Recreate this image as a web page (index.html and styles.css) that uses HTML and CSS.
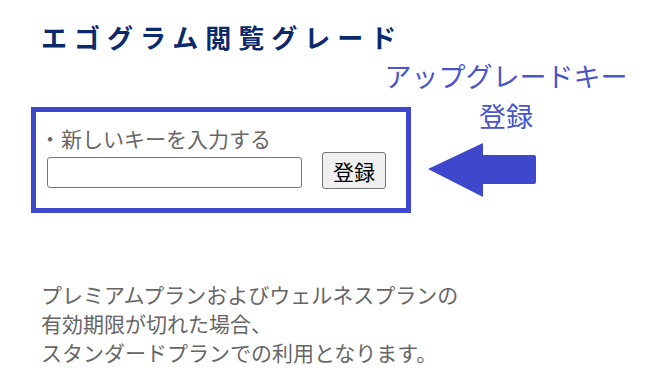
FILE: index.html
```html
<!DOCTYPE html>
<html lang="ja">
<head>
    <meta charset="UTF-8">
    <meta name="viewport" content="width=device-width, initial-scale=1.0">
    <title>エゴグラム閲覧グレード</title>
    <link rel="stylesheet" href="styles.css">
</head>
<body>

    <div class="page">
        <h1>エゴグラム閲覧グレード</h1>

        <!-- Key registration box -->
        <div class="key-area">
            <form class="key-box" id="keyForm">
                <label for="upgradeKey" class="key-label"><span class="dot">・</span>新しいキーを入力する</label>
                <div class="key-row">
                    <input type="text" id="upgradeKey" name="upgrade_key">
                    <input type="submit" value="登録">
                </div>
            </form>

            <!-- Annotation callout -->
            <div class="callout">
                <p class="callout-text">アップグレードキー<br>登録</p>
                <svg class="callout-arrow" width="108" height="54" viewBox="0 0 108 54">
                    <path d="M0 26 L55 0 L55 12 L106 12 Q108 12 108 14 L108 39 Q108 41 106 41 L55 41 L55 54 Z" fill="#3f48cc"/>
                </svg>
            </div>
        </div>

        <p class="notice">
            プレミアムプランおよびウェルネスプランの<br>
            有効期限が切れた場合、<br>
            スタンダードプランでの利用となります。
        </p>
    </div>

</body>
</html>
```

FILE: styles.css
```css
/* Global Styles */
body {
    font-family: "Noto Sans CJK JP", "Noto Sans", sans-serif;
    background-color: #fff;
    margin: 0;
    padding: 0;
}

.page {
    position: relative;
    padding: 17px 0 0 31px;
}

h1 {
    margin: 0 0 0 10px;
    font-size: 26px;
    line-height: 40px;
    letter-spacing: 7px;
    font-weight: 700;
    color: #0b2a6b;
}

/* Key registration */
.key-area {
    margin-top: 50px;
}

.key-box {
    width: 370px;
    border: 5px solid #3f48cc;
    padding: 12px 0 19px 0;
    margin: 0;
}

.key-label {
    display: block;
    font-size: 21px;
    line-height: 28px;
    color: #666;
    margin-left: 3px;
}

.key-label .dot {
    display: inline-block;
    width: 22px;
    text-align: center;
}

.key-row {
    display: flex;
    align-items: flex-start;
    margin: 5px 0 0 11px;
}

input[type="text"] {
    width: 255px;
    height: 31px;
    box-sizing: border-box;
    border: 1px solid #767676;
    border-radius: 3px;
    margin: 0 20px 0 0;
    padding: 0 6px;
    font-size: 16px;
}

input[type="submit"] {
    width: 64px;
    height: 37px;
    box-sizing: border-box;
    background-color: #efefef;
    border: 1px solid #767676;
    border-radius: 3px;
    font-family: "Noto Sans CJK JP", sans-serif;
    font-size: 21px;
    color: #000;
    padding: 0;
    margin-top: -5px;
}

/* Annotation callout */
.callout {
    position: absolute;
    left: 370px;
    top: 56px;
    width: 272px;
}

.callout-text {
    margin: 0;
    text-align: center;
    font-size: 27px;
    line-height: 40px;
    color: #4a55c8;
}

.callout-arrow {
    display: block;
    margin: 7px 0 0 58px;
}

/* Notice */
.notice {
    margin: 67px 0 0 10px;
    font-size: 21px;
    line-height: 29px;
    color: #666;
}
```
